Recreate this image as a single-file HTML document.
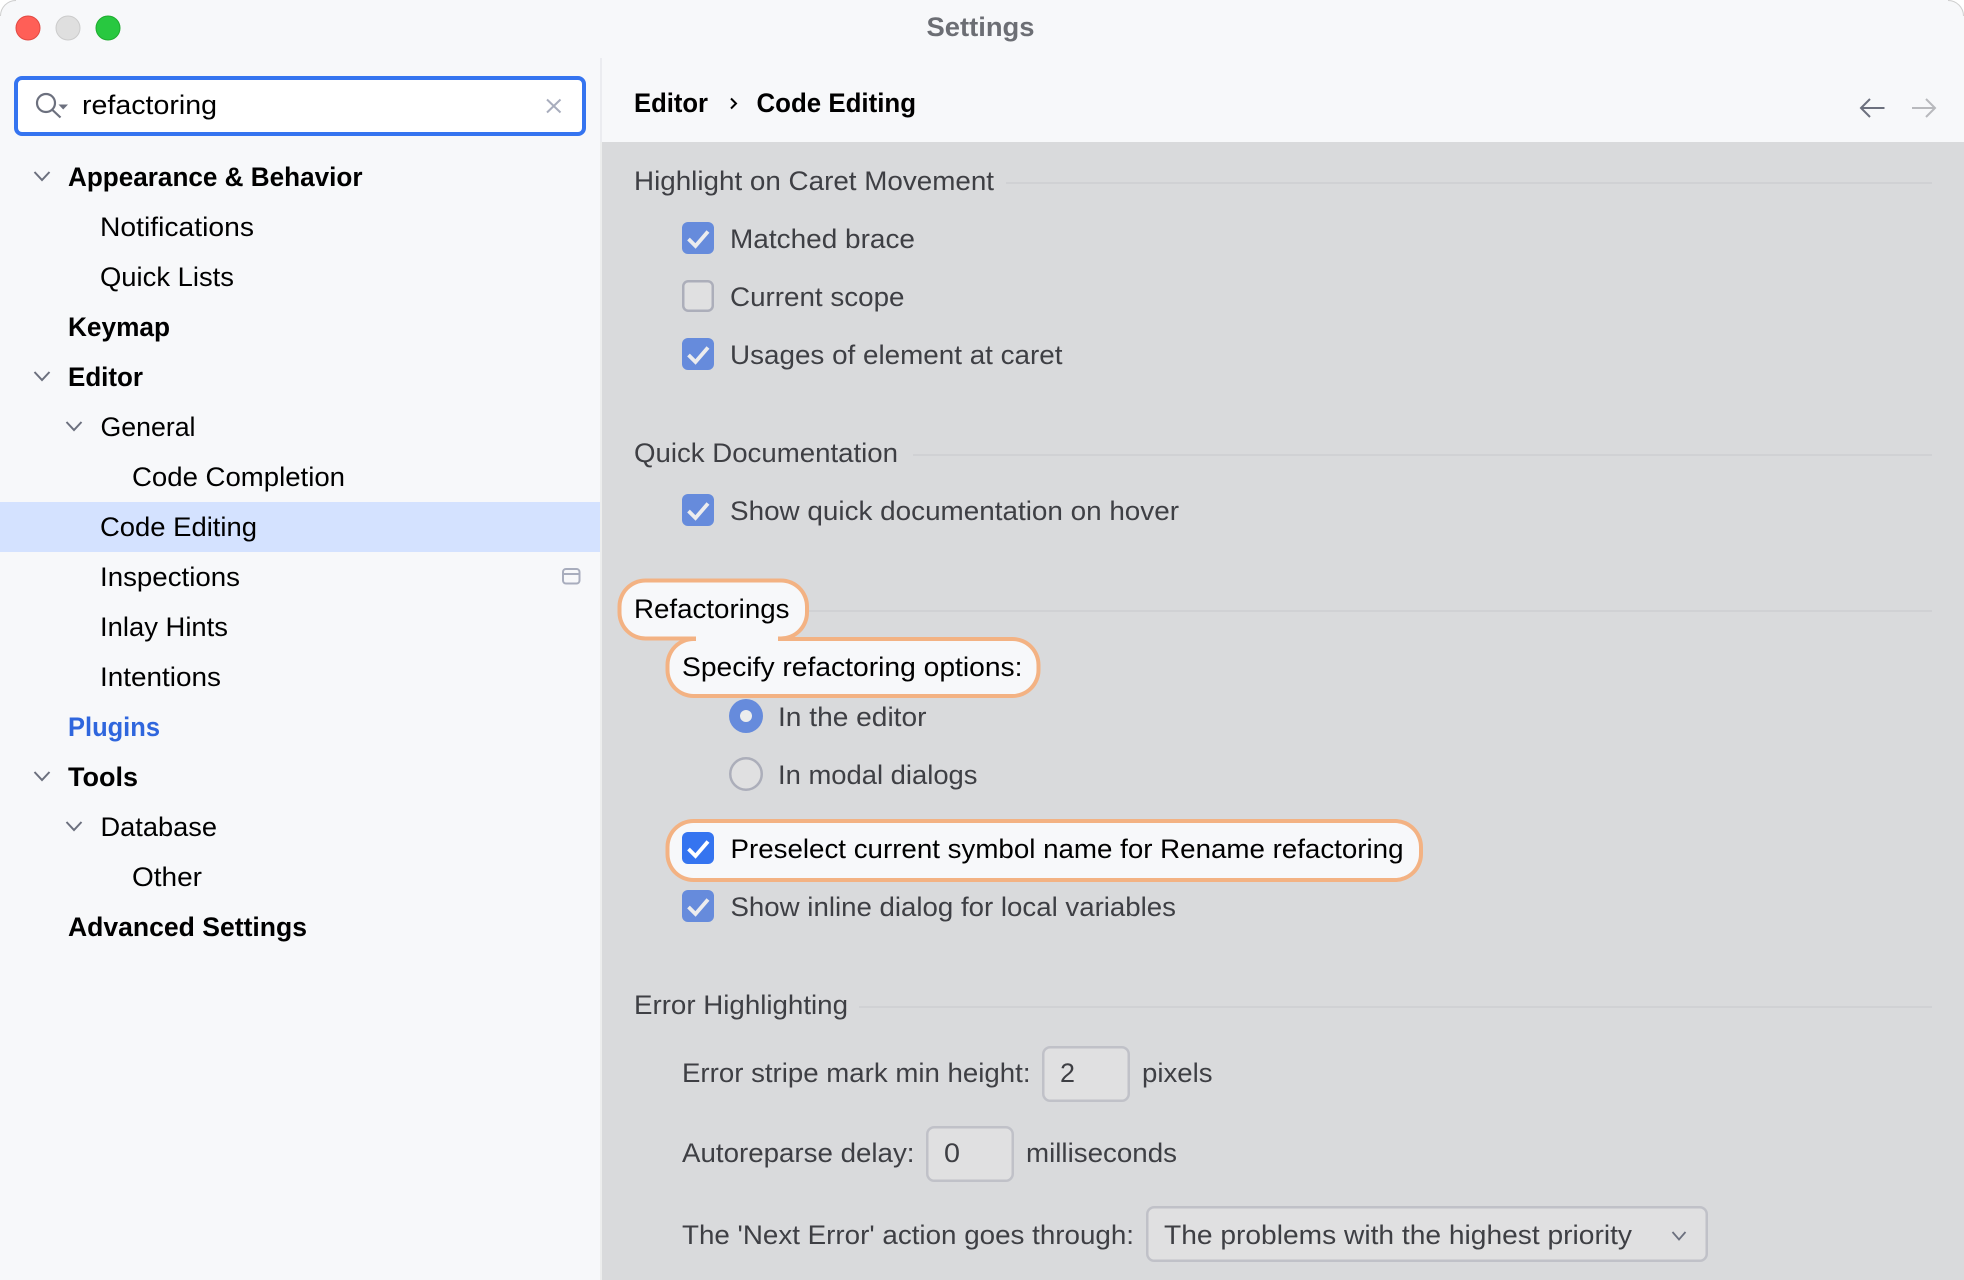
<!DOCTYPE html>
<html><head><meta charset="utf-8"><title>Settings</title>
<style>
html,body{margin:0;padding:0;background:#fff;width:1964px;height:1280px;overflow:hidden}
svg{display:block}
text{font-family:"Liberation Sans",sans-serif;font-size:27px;fill:#000}
.b{font-weight:700}
.d{fill:#3e3f44}
</style></head><body>
<svg width="1964" height="1280" viewBox="0 0 1964 1280" xmlns="http://www.w3.org/2000/svg">
<rect x="0" y="0" width="1964" height="1300" rx="16" fill="#f7f8fa"/>
<path d="M0.500 16 A15.500 15.500 0 0 1 16 0.500 M1948 0.500 A15.500 15.500 0 0 1 1963.500 16" fill="none" stroke="#cfcfcf" stroke-width="1"/>
<rect x="600" y="58" width="2" height="84" fill="#ebecf0"/>
<rect x="602" y="142" width="1362" height="1138" fill="#d9dadc"/>
<rect x="600" y="142" width="2" height="1138" fill="#eceded"/>
<!-- traffic lights -->
<circle cx="28" cy="28" r="12" fill="#ff5f57" stroke="#e14942" stroke-width="1"/>
<circle cx="68" cy="28" r="12" fill="#dfdfdf" stroke="#cbcbcb" stroke-width="1"/>
<circle cx="108" cy="28" r="12" fill="#28c840" stroke="#1eab2f" stroke-width="1"/>
<text class="b" x="926.500" y="36" textLength="108" lengthAdjust="spacingAndGlyphs" style="fill:#6c6e74">Settings</text>
<!-- search -->
<rect x="16" y="78" width="568" height="56" rx="6" fill="#fff" stroke="#3574f0" stroke-width="4"/>
<circle cx="46" cy="103" r="9" fill="none" stroke="#6c707e" stroke-width="2.200"/>
<path d="M52.500 110 L60.500 117.500" fill="none" stroke="#6c707e" stroke-width="2.200"/>
<path d="M58.500 104.500 H68 L63.200 109.500 Z" fill="#6c707e"/>
<text x="82" y="114" textLength="135" lengthAdjust="spacingAndGlyphs">refactoring</text>
<path d="M547 99.500 L560.500 112.500 M560.500 99.500 L547 112.500" fill="none" stroke="#a8adbd" stroke-width="2"/>
<!-- sidebar -->
<rect x="0" y="502" width="600" height="50" fill="#d4e2ff"/>
<g fill="none" stroke="#6c707e" stroke-width="2">
<path d="M34.500 172 L42 180 L49.500 172"/>
<path d="M34.500 372 L42 380 L49.500 372"/>
<path d="M66.500 422 L74 430 L81.500 422"/>
<path d="M34.500 772 L42 780 L49.500 772"/>
<path d="M66.500 822 L74 830 L81.500 822"/>
</g>
<text class="b" x="68" y="186" textLength="294.500" lengthAdjust="spacingAndGlyphs">Appearance &amp; Behavior</text>
<text x="100" y="236" textLength="154" lengthAdjust="spacingAndGlyphs">Notifications</text>
<text x="100" y="286" textLength="134" lengthAdjust="spacingAndGlyphs">Quick Lists</text>
<text class="b" x="68" y="336" textLength="102" lengthAdjust="spacingAndGlyphs">Keymap</text>
<text class="b" x="68" y="386" textLength="75" lengthAdjust="spacingAndGlyphs">Editor</text>
<text x="100.500" y="436" textLength="95" lengthAdjust="spacingAndGlyphs">General</text>
<text x="132" y="486" textLength="213" lengthAdjust="spacingAndGlyphs">Code Completion</text>
<text x="100" y="536" textLength="157" lengthAdjust="spacingAndGlyphs">Code Editing</text>
<text x="100" y="586" textLength="140" lengthAdjust="spacingAndGlyphs">Inspections</text>
<rect x="563" y="569" width="16.500" height="14.500" rx="3" fill="none" stroke="#a8adbd" stroke-width="2"/>
<path d="M563 574 H579.500" stroke="#a8adbd" stroke-width="2"/>
<text x="100" y="636" textLength="128" lengthAdjust="spacingAndGlyphs">Inlay Hints</text>
<text x="100" y="686" textLength="121" lengthAdjust="spacingAndGlyphs">Intentions</text>
<text class="b" x="68" y="736" textLength="92" lengthAdjust="spacingAndGlyphs" style="fill:#2f66dd">Plugins</text>
<text class="b" x="68" y="786" textLength="70" lengthAdjust="spacingAndGlyphs">Tools</text>
<text x="100.500" y="836" textLength="116.500" lengthAdjust="spacingAndGlyphs">Database</text>
<text x="132" y="886" textLength="70" lengthAdjust="spacingAndGlyphs">Other</text>
<text class="b" x="68" y="936" textLength="239" lengthAdjust="spacingAndGlyphs">Advanced Settings</text>
<!-- header -->
<text class="b" x="634" y="112" textLength="74" lengthAdjust="spacingAndGlyphs">Editor</text>
<path d="M731 98.500 L736 103.500 L731 108.500" fill="none" stroke="#000" stroke-width="2"/>
<text class="b" x="756.500" y="112" textLength="159.500" lengthAdjust="spacingAndGlyphs">Code Editing</text>
<path d="M1884.500 108 H1861 M1870 99 L1861 108 L1870 117" fill="none" stroke="#6c707e" stroke-width="2"/>
<path d="M1912 108 H1935 M1926 99 L1935 108 L1926 117" fill="none" stroke="#b8b9bd" stroke-width="2"/>
<!-- section lines -->
<g fill="#d0d1d4">
<rect x="1006" y="182" width="926" height="2"/>
<rect x="913" y="454" width="1019" height="2"/>
<rect x="807" y="610" width="1125" height="2"/>
<rect x="859" y="1006" width="1073" height="2"/>
</g>
<text class="d" x="634" y="190" textLength="360" lengthAdjust="spacingAndGlyphs">Highlight on Caret Movement</text>
<rect x="682" y="222" width="32" height="32" rx="6" fill="#668bdc"/>
<path d="M688.500 239 L695.500 246 L708 231.500" fill="none" stroke="#ececee" stroke-width="3.800"/>
<text class="d" x="730" y="248" textLength="185" lengthAdjust="spacingAndGlyphs">Matched brace</text>
<rect x="683.250" y="281.250" width="29.500" height="29.500" rx="5" fill="#e0e0e1" stroke="#acaeba" stroke-width="2.500"/>
<text class="d" x="730" y="306" textLength="174.500" lengthAdjust="spacingAndGlyphs">Current scope</text>
<rect x="682" y="338" width="32" height="32" rx="6" fill="#668bdc"/>
<path d="M688.500 355 L695.500 362 L708 347.500" fill="none" stroke="#ececee" stroke-width="3.800"/>
<text class="d" x="730" y="364" textLength="332.500" lengthAdjust="spacingAndGlyphs">Usages of element at caret</text>
<text class="d" x="634" y="462" textLength="264" lengthAdjust="spacingAndGlyphs">Quick Documentation</text>
<rect x="682" y="494" width="32" height="32" rx="6" fill="#668bdc"/>
<path d="M688.500 511 L695.500 518 L708 503.500" fill="none" stroke="#ececee" stroke-width="3.800"/>
<text class="d" x="730" y="520" textLength="449" lengthAdjust="spacingAndGlyphs">Show quick documentation on hover</text>
<!-- highlight pills -->
<rect x="617.500" y="578.500" width="191.500" height="62" rx="28" fill="#f3b283"/>
<rect x="665.500" y="637" width="375" height="61" rx="28" fill="#f3b283"/>
<rect x="621.500" y="582.500" width="183.500" height="54" rx="24" fill="#f7f8fa"/>
<rect x="669.500" y="641" width="367" height="53" rx="24" fill="#f7f8fa"/>
<rect x="696" y="630" width="82" height="16" fill="#f7f8fa"/>
<text x="634" y="618" textLength="155.500" lengthAdjust="spacingAndGlyphs">Refactorings</text>
<text x="682" y="676" textLength="340.500" lengthAdjust="spacingAndGlyphs">Specify refactoring options:</text>
<circle cx="746" cy="716" r="17" fill="#668bdc"/>
<circle cx="746" cy="716" r="6" fill="#eceded"/>
<text class="d" x="778" y="726" textLength="148.500" lengthAdjust="spacingAndGlyphs">In the editor</text>
<circle cx="746" cy="774" r="15.750" fill="#e0e0e1" stroke="#acaeba" stroke-width="2.500"/>
<text class="d" x="778" y="784" textLength="199.500" lengthAdjust="spacingAndGlyphs">In modal dialogs</text>
<rect x="665.500" y="819" width="757.500" height="63" rx="28" fill="#f3b283"/>
<rect x="669.500" y="823" width="749.500" height="55" rx="24" fill="#f7f8fa"/>
<rect x="682" y="832" width="32" height="32" rx="6" fill="#3574f0"/>
<path d="M688.500 849 L695.500 856 L708 841.500" fill="none" stroke="#fff" stroke-width="3.800"/>
<text x="730.500" y="858" textLength="673" lengthAdjust="spacingAndGlyphs">Preselect current symbol name for Rename refactoring</text>
<rect x="682" y="890" width="32" height="32" rx="6" fill="#668bdc"/>
<path d="M688.500 907 L695.500 914 L708 899.500" fill="none" stroke="#ececee" stroke-width="3.800"/>
<text class="d" x="730.500" y="916" textLength="445.500" lengthAdjust="spacingAndGlyphs">Show inline dialog for local variables</text>
<!-- error highlighting -->
<text class="d" x="634" y="1014" textLength="214" lengthAdjust="spacingAndGlyphs">Error Highlighting</text>
<text class="d" x="682" y="1082" textLength="348.500" lengthAdjust="spacingAndGlyphs">Error stripe mark min height:</text>
<rect x="1043.250" y="1047.250" width="85.500" height="53.500" rx="7" fill="#e0e0e1" stroke="#c0c1c8" stroke-width="2.500"/>
<text class="d" x="1060" y="1082" textLength="15" lengthAdjust="spacingAndGlyphs">2</text>
<text class="d" x="1142" y="1082" textLength="70.500" lengthAdjust="spacingAndGlyphs">pixels</text>
<text class="d" x="682" y="1162" textLength="232.500" lengthAdjust="spacingAndGlyphs">Autoreparse delay:</text>
<rect x="927.250" y="1127.250" width="85.500" height="53.500" rx="7" fill="#e0e0e1" stroke="#c0c1c8" stroke-width="2.500"/>
<text class="d" x="944" y="1162" textLength="16" lengthAdjust="spacingAndGlyphs">0</text>
<text class="d" x="1026" y="1162" textLength="151" lengthAdjust="spacingAndGlyphs">milliseconds</text>
<text class="d" x="682" y="1244" textLength="452" lengthAdjust="spacingAndGlyphs">The 'Next Error' action goes through:</text>
<rect x="1147.250" y="1207.250" width="559.500" height="53.500" rx="7" fill="#e0e0e1" stroke="#c0c1c8" stroke-width="2.500"/>
<text class="d" x="1164" y="1244" textLength="468" lengthAdjust="spacingAndGlyphs">The problems with the highest priority</text>
<path d="M1672.500 1232 L1679 1239.500 L1685.500 1232" fill="none" stroke="#6c707e" stroke-width="1.800"/>
</svg>
</body></html>
